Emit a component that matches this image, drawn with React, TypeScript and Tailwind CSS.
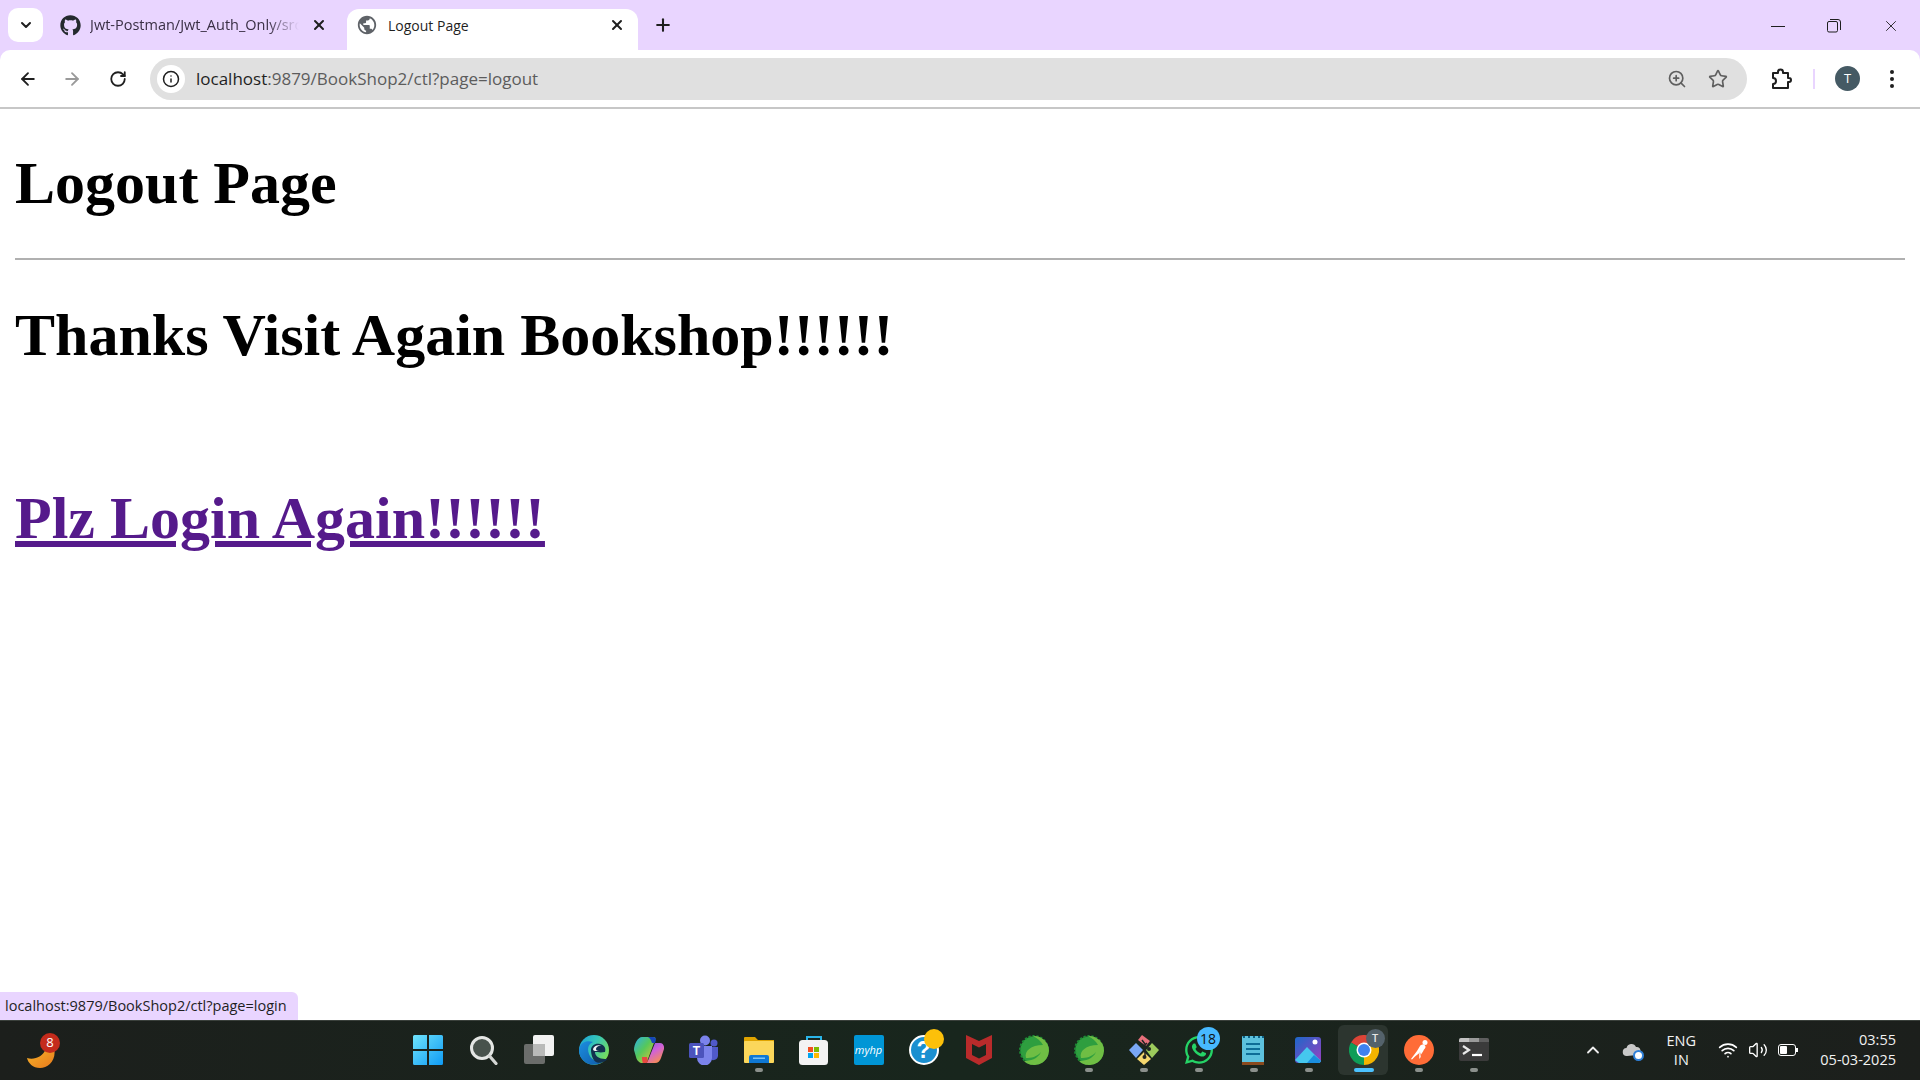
import { ArrowLeft, ArrowRight, ChevronDown, ChevronUp, Info, Plus, RotateCw, Star, Volume2, Wifi, X, ZoomIn } from 'lucide-react';
import { FaGithub, FaWhatsapp } from 'react-icons/fa';
import { MdPublic } from 'react-icons/md';

const uiFont = "font-['Open_Sans','Noto_Sans',sans-serif]";

function Dot({ active }: { active?: boolean }) {
  return (
    <span
      className={`absolute bottom-[3px] left-1/2 h-[4px] -translate-x-1/2 rounded-full ${
        active ? 'w-[20px] bg-[#4cc2ff]' : 'w-[8px] bg-[#8b908c]'
      }`}
    />
  );
}

function TaskIcon({ children, dot, active }: { children: React.ReactNode; dot?: boolean; active?: boolean }) {
  return (
    <div className="relative flex h-[50px] w-[55px] shrink-0 items-center justify-center">
      {active && <div className="absolute inset-y-0 left-[2px] right-[3px] rounded-md bg-[#2c352f]" />}
      <div className="relative flex h-[30px] w-[30px] items-center justify-center">{children}</div>
      {dot && <Dot active={active} />}
    </div>
  );
}

function Badge({ children, className }: { children: React.ReactNode; className: string }) {
  return <span className={`absolute flex items-center justify-center rounded-full ${className}`}>{children}</span>;
}

const WindowsLogo = () => (
  <svg viewBox="0 0 30 30" className="h-[30px] w-[30px] -translate-x-px">
    <defs>
      <linearGradient id="win" x1="0" y1="0" x2="1" y2="1">
        <stop offset="0" stopColor="#6fe3fb" />
        <stop offset="1" stopColor="#0f9bf5" />
      </linearGradient>
    </defs>
    <path d="M0 1.5A1.5 1.5 0 0 1 1.5 0H14v14H0zM16 0h12.500A1.500 1.500 0 0 1 30 1.500V14H16zM0 16h14v14H1.500A1.500 1.500 0 0 1 0 28.500zM16 16h14v12.500a1.500 1.500 0 0 1-1.500 1.500H16z" fill="url(#win)" />
  </svg>
);

const SearchIcon = () => (
  <svg viewBox="0 0 30 30" className="h-[30px] w-[30px]">
    <circle cx="13" cy="13" r="10.500" fill="#48524c" stroke="#e4e6e4" strokeWidth="3" />
    <path d="M20.500 21l6.500 7.500" stroke="#d4d6d4" strokeWidth="3.200" strokeLinecap="round" />
  </svg>
);

const TaskView = () => (
  <svg viewBox="0 0 30 30" className="h-[30px] w-[30px]">
    <rect x="0" y="9" width="21" height="20" rx="2" fill="#6b6d6b" />
    <rect x="9" y="0" width="21" height="21" rx="2" fill="#f2f2f2" />
    <rect x="9" y="9" width="12" height="12" fill="#b9bab9" />
  </svg>
);

const EdgeIcon = () => (
  <svg viewBox="0 0 30 30" className="h-[30px] w-[30px]">
    <defs>
      <linearGradient id="edgeA" x1="0" y1="0" x2="1" y2="0.6">
        <stop offset="0" stopColor="#1a9fdc" />
        <stop offset="0.5" stopColor="#35c6b8" />
        <stop offset="1" stopColor="#76dc5c" />
      </linearGradient>
      <linearGradient id="edgeB" x1="0" y1="0" x2="1" y2="1">
        <stop offset="0" stopColor="#1c8fe0" />
        <stop offset="1" stopColor="#0f5aa8" />
      </linearGradient>
    </defs>
    <circle cx="15" cy="15" r="15" fill="url(#edgeA)" />
    <path d="M0 15C1 7 8 5 14 7c-5 2-6 7-4 12 2 6 9 9 15 6.500C20 31 11 31 6 27 2 24 0 20 0 15z" fill="url(#edgeB)" />
    <path d="M12 15c0-4 4-7 9-6 5 1 6 5 5 8-5 1-7 0-10 0 0 4 4 7 10 7 2 0 3 0 3-.5-3 4-8 5-11 4-4-1-6-8-6-12.500z" fill="#12314f" />
    <path d="M14 14c1-3 5-5 9-3-3-1-6 1-6 3 0 1 1 2 3 2h-4c-1 0-2-1-2-2z" fill="#ffffff" fillOpacity="0.950" />
  </svg>
);

const CopilotIcon = () => (
  <svg viewBox="0 0 30 30" className="h-[30px] w-[30px]">
    <defs>
      <linearGradient id="copA" x1="0" y1="0" x2="1" y2="1">
        <stop offset="0" stopColor="#2bb0e8" />
        <stop offset="0.450" stopColor="#56c85a" />
        <stop offset="1" stopColor="#f6c52f" />
      </linearGradient>
      <linearGradient id="copB" x1="0" y1="0" x2="0.600" y2="1">
        <stop offset="0" stopColor="#7a5ae0" />
        <stop offset="0.500" stopColor="#d062d8" />
        <stop offset="1" stopColor="#f58a5a" />
      </linearGradient>
    </defs>
    <path d="M8 2h11c2.500 0 3 1 2 3l-7 19c-1 3-3 4-6 4-2 0-5-2-6-6L0 15C0 9 4 2 8 2z" fill="url(#copA)" />
    <path d="M11 28h10c3 0 5-2 6-5l3-9c.5-3-1-6-4-6h-5l-6 15c-1 3-2 5-4 5z" fill="url(#copB)" />
    <path d="M14 2h5c2 0 3 1 3 3l-1 3h-3c-1-3-2-5-4-6z" fill="#1646b8" />
    <path d="M8 22h5l1 5-2 1H9c-1-2-1-4-1-6z" fill="#e8483f" />
  </svg>
);

const TeamsIcon = () => (
  <svg viewBox="0 0 30 30" className="h-[30px] w-[30px]">
    <circle cx="16" cy="5.500" r="5" fill="#7b83eb" />
    <circle cx="25" cy="8" r="3.500" fill="#5059c9" />
    <path d="M20 12h9v9a5 5 0 0 1-9 2z" fill="#5059c9" />
    <path d="M8 11h15v12a7 7 0 0 1-15 0z" fill="#7b83eb" />
    <rect x="0" y="8" width="15" height="15" rx="1.500" fill="#4b53bc" />
    <text x="7.500" y="20" textAnchor="middle" fontSize="12" fontWeight="700" fill="#fff" fontFamily="Liberation Sans">T</text>
  </svg>
);

const ExplorerIcon = () => (
  <svg viewBox="0 0 30 30" className="h-[30px] w-[30px]">
    <path d="M0 3a1 1 0 0 1 1-1h10l3 3h16v20H0z" fill="#e0a400" />
    <rect x="0" y="6" width="30" height="22" rx="1" fill="#fbd75b" />
    <path d="M5 28v-6a2 2 0 0 1 2-2h16a2 2 0 0 1 2 2v6z" fill="#0f78d4" />
    <rect x="9" y="22.500" width="12" height="1.500" fill="#7cc4f5" />
  </svg>
);

const StoreIcon = () => (
  <svg viewBox="0 0 30 30" className="h-[30px] w-[30px]">
    <path d="M8 6V2h14v4" fill="none" stroke="#2ab5e8" strokeWidth="2" />
    <rect x="0" y="5" width="29" height="25" rx="3.500" fill="#f3f3f3" />
    <rect x="9" y="12" width="5" height="5" fill="#f25022" />
    <rect x="15" y="12" width="5" height="5" fill="#7fba00" />
    <rect x="9" y="18" width="5" height="5" fill="#00a4ef" />
    <rect x="15" y="18" width="5" height="5" fill="#ffb900" />
  </svg>
);

const HelpIcon = () => (
  <div className="relative flex h-[30px] w-[30px] items-center justify-center rounded-full border-2 border-white bg-[#1a8fd0] font-['Liberation_Sans',sans-serif] text-[23px] font-bold leading-none text-white">
    ?
    <Badge className="-right-[7px] -top-[8px] h-[20px] w-[20px] bg-[#fcc00a]">{null}</Badge>
  </div>
);

const McAfeeIcon = () => (
  <svg viewBox="0 0 30 30" className="h-[30px] w-[30px]">
    <path d="M2 0l13 6 13-6v23l-13 7-13-7z" fill="#b92b2b" />
    <path d="M8 9l7 3.500L22 9v11l-7 3.500L8 20z" fill="#1a261e" />
  </svg>
);

const SpringIcon = () => (
  <svg viewBox="0 0 30 30" className="h-[30px] w-[30px]">
    <circle cx="15" cy="15" r="13.800" fill="#2e9e3f" />
    <circle cx="15" cy="15" r="14" fill="none" stroke="#1e8a35" strokeWidth="2" strokeDasharray="2.200 1.800" />
    <path d="M14 1c8-.5 16 6 16 14 0 9-7 15-15 15-5 0-8-2-10-4 6 0 14-2 17-9-4 5-10 6-15 6-2-7 5-13 17-13-2-4-6-7-10-9z" fill="#6fbe44" />
  </svg>
);

const GitKrakenIcon = () => (
  <svg viewBox="0 0 30 30" className="h-[30px] w-[30px]">
    <path d="M7 8L0 15l7 8 7-8z" fill="#7aa7f5" />
    <path d="M23 8l7 7-7 8-6-8z" fill="#9ccb5c" />
    <path d="M15 17l-7 7 7 6 7-6z" fill="#f5d76e" />
    <path d="M9 5l4-5 8 6-4 5z" fill="#e8707b" />
    <path d="M13 5l3 4v13M18 8l-3 3" stroke="#222" strokeWidth="1.500" fill="none" />
    <circle cx="15.500" cy="22" r="2" fill="#222" />
    <circle cx="20" cy="14" r="2" fill="#222" />
  </svg>
);

const NotepadIcon = () => (
  <svg viewBox="0 0 30 30" className="h-[30px] w-[30px]">
    <rect x="3" y="1" width="22" height="28" rx="1" fill="#5cc1dd" />
    <rect x="3" y="27" width="22" height="3" fill="#8a4a1e" />
    <path d="M7 9h14M7 14h14M7 19h14" stroke="#0e6d97" strokeWidth="2" />
    <path d="M5 1v2M10 1v2M15 1v2M20 1v2M24 1v2" stroke="#0b5f84" strokeWidth="2" />
  </svg>
);

const PhotosIcon = () => (
  <svg viewBox="0 0 30 30" className="h-[30px] w-[30px]">
    <defs>
      <linearGradient id="photo" x1="0" y1="0" x2="1" y2="1">
        <stop offset="0" stopColor="#1c68c9" />
        <stop offset="1" stopColor="#9a3fc0" />
      </linearGradient>
    </defs>
    <rect x="1" y="2" width="26" height="26" rx="3" fill="url(#photo)" />
    <circle cx="21" cy="7" r="2.500" fill="#fff" />
    <path d="M1 25l12-13 14 14v0a3 3 0 0 1-3 2H5z" fill="#45c7ee" />
    <path d="M13 28l7-8 7 6a3 3 0 0 1-3 2z" fill="#1a8fe0" />
  </svg>
);

const ChromeIcon = () => (
  <svg viewBox="0 0 30 30" className="h-[30px] w-[30px]">
    <path d="M15 15L2 7.500A15 15 0 0 1 28 7.500z" fill="#db4437" />
    <path d="M15 15L28 7.500A15 15 0 0 1 15 30z" fill="#f4b400" />
    <path d="M15 15V30A15 15 0 0 1 2 7.500z" fill="#0f9d58" />
    <circle cx="15" cy="15" r="7.500" fill="#fff" />
    <circle cx="15" cy="15" r="6" fill="#3f81f0" />
  </svg>
);

const PostmanIcon = () => (
  <svg viewBox="0 0 30 30" className="h-[30px] w-[30px]">
    <circle cx="15" cy="15" r="15" fill="#ff6c37" />
    <circle cx="21" cy="7.500" r="2.500" fill="#fff" />
    <path d="M7 24l6-8 3-5c1-1.500 4-2 5-.5 1 1 .5 3-1 4l-1 2-2 3-1-2-5 4-3 3z" fill="#fff" />
    <path d="M16 16l1 6-2 2v-5z" fill="#ffd9c9" />
  </svg>
);

const TerminalIcon = () => (
  <svg viewBox="0 0 30 30" className="h-[30px] w-[30px]">
    <rect x="0" y="3" width="30" height="23" rx="2" fill="#3b3b3b" />
    <path d="M0 7V5a2 2 0 0 1 2-2h8v4z" fill="#c2c2c2" />
    <path d="M10 3h10v4H10z" fill="#9a9a9a" />
    <path d="M20 3h8a2 2 0 0 1 2 2v2H20z" fill="#5e5e5e" />
    <path d="M4 11l6 4-6 4" fill="none" stroke="#e8e8e8" strokeWidth="2.200" />
    <path d="M13 20h10" stroke="#fff" strokeWidth="2.200" />
  </svg>
);

export default function App() {
  return (
    <div className={`flex h-screen w-full flex-col overflow-hidden bg-white ${uiFont}`}>
      {/* tab strip */}
      <div className="flex h-[50px] shrink-0 items-end bg-[#e9d5ff] pl-[8px]">
        <div className="mb-[8px] flex h-[34px] w-[35px] items-center justify-center rounded-[10px] bg-white">
          <ChevronDown size={16} strokeWidth={3} className="text-[#1f1f1f]" />
        </div>
        <div className="mb-[8px] flex h-[34px] w-[304px] items-center pl-[17px] pr-[20px]">
          <FaGithub size={21} className="shrink-0 text-[#24292e]" />
          <span className="ml-[9px] w-[209px] overflow-hidden whitespace-nowrap text-[14.500px] text-[#3a2f45] [mask-image:linear-gradient(to_right,black_85%,transparent)]">
            Jwt-Postman/Jwt_Auth_Only/src
          </span>
          <X size={16} strokeWidth={3} className="ml-auto text-[#1f1f1f]" />
        </div>
        <div className="flex h-[41px] w-[291px] items-center rounded-t-[12px] bg-white pb-[9px] pl-[9px] pr-[13px]">
          <MdPublic size={22} className="shrink-0 text-[#5f6368]" />
          <span className="ml-[10px] text-[14px] text-[#1f1f1f]">Logout Page</span>
          <X size={16} strokeWidth={3} className="ml-auto text-[#1f1f1f]" />
        </div>
        <div className="mb-[8px] ml-[15px] flex h-[34px] w-[20px] items-center justify-center">
          <Plus size={20} strokeWidth={2.5} className="text-[#1f1f1f]" />
        </div>
        <div className="ml-auto flex h-[48px] items-center">
          <div className="flex w-[56px] justify-center">
            <div className="h-px w-[14px] bg-[#1f1f1f]" />
          </div>
          <div className="flex w-[56px] justify-center">
            <svg viewBox="0 0 14 14" className="h-[14px] w-[14px]" fill="none" stroke="#1f1f1f" strokeWidth="1">
              <rect x="0.500" y="2.500" width="10" height="10.500" rx="1.500" />
              <path d="M3 .500h8a2.500 2.500 0 0 1 2.500 2.500v8" />
            </svg>
          </div>
          <div className="flex w-[58px] justify-center">
            <X size={18} strokeWidth={1.2} className="text-[#1f1f1f]" />
          </div>
        </div>
      </div>

      {/* toolbar */}
      <div className="flex h-[59px] shrink-0 items-center border-b-2 border-[#c7c7c7] bg-[#e9d5ff]">
        <div className="flex h-full w-full items-center rounded-t-[10px] bg-white">
          <ArrowLeft size={20} strokeWidth={2.2} className="ml-[18px] text-[#1f1f1f]" />
          <ArrowRight size={20} strokeWidth={2.2} className="ml-[24px] text-[#9a9a9a]" />
          <RotateCw size={18} strokeWidth={2.4} className="ml-[27px] text-[#1f1f1f]" />
          <div className="ml-[23px] flex h-[42px] w-[1597px] items-center rounded-full bg-[#e0e0e0] pl-[7px] pr-[19px]">
            <div className="flex h-[28px] w-[28px] items-center justify-center rounded-full bg-white">
              <Info size={18} strokeWidth={2} className="text-[#1f1f1f]" />
            </div>
            <span className="ml-[11px] text-[17px] text-[#5c5c5c]">
              <span className="text-[#1f1f1f]">localhost</span>:9879/BookShop2/ctl?page=logout
            </span>
            <ZoomIn size={20} strokeWidth={2} className="ml-auto text-[#5f5f5f]" />
            <Star size={20} strokeWidth={2} className="ml-[21px] text-[#5f5f5f]" />
          </div>
          <svg viewBox="0 0 24 24" className="ml-[22px] h-[24px] w-[24px]" fill="none" stroke="#1f1f1f" strokeWidth="2">
            <path d="M4 6h5V5a2.500 2.500 0 0 1 5 0v1h5v5h1a2 2 0 0 1 0 4h-1v6H4v-4a2.500 2.500 0 0 0 0-6z" strokeLinejoin="round" />
          </svg>
          <div className="ml-[20px] h-[20px] w-[2px] bg-[#e9d5ff]" />
          <div className="ml-[20px] flex h-[25px] w-[25px] items-center justify-center rounded-full bg-[#455a64] text-[13px] text-white">
            T
          </div>
          <div className="ml-[30px] flex flex-col gap-[3px]">
            <span className="h-[4px] w-[4px] rounded-full bg-[#1f1f1f]" />
            <span className="h-[4px] w-[4px] rounded-full bg-[#1f1f1f]" />
            <span className="h-[4px] w-[4px] rounded-full bg-[#1f1f1f]" />
          </div>
        </div>
      </div>

      {/* page */}
      <div className="relative flex-1 px-[15px] font-['Liberation_Serif',serif] text-black">
        <h1 className="mt-[40px] text-[60px] font-bold leading-[69px]">Logout Page</h1>
        <hr className="mt-[40px] border-0 border-t-2 border-[#b0b0b0]" />
        <h1 className="mt-[41px] text-[60px] font-bold leading-[69px]">Thanks Visit Again Bookshop!!!!!!</h1>
        <h1 className="mt-[114px] text-[60px] font-bold leading-[69px]">
          <a href="#" className="text-[#551a8b] underline">
            Plz Login Again!!!!!!
          </a>
        </h1>
        <div className={`absolute bottom-0 left-0 flex h-[28px] w-[298px] items-center rounded-tr-[6px] bg-[#e9d5ff] pl-[5px] text-[14.500px] text-[#1f1f1f] ${uiFont}`}>
          localhost:9879/BookShop2/ctl?page=login
        </div>
      </div>

      {/* taskbar */}
      <div className="flex h-[60px] shrink-0 items-center border-t border-[#3a403b] bg-gradient-to-r from-[#1c1f1c] via-[#18261d] to-[#1c1f1c] pb-[1px] text-white">
        <div className="relative ml-[25px] h-[50px] w-[376px] shrink-0">
          <svg viewBox="0 0 30 22" className="absolute left-[1px] top-[22px] h-[22px] w-[30px]">
            <defs>
              <linearGradient id="moon" x1="0" y1="0" x2="1" y2="1">
                <stop offset="0" stopColor="#f5b52a" />
                <stop offset="1" stopColor="#e8791c" />
              </linearGradient>
            </defs>
            <path d="M1 11c6 2 16 0 19-10h8c3 12-6 20-14 20C7 21 2 16 1 11z" fill="url(#moon)" />
          </svg>
          <Badge className="left-[15px] top-[8px] h-[20px] w-[20px] bg-[#c42b1c] text-[13px] text-white">8</Badge>
        </div>
        <TaskIcon><WindowsLogo /></TaskIcon>
        <TaskIcon><SearchIcon /></TaskIcon>
        <TaskIcon><TaskView /></TaskIcon>
        <TaskIcon><EdgeIcon /></TaskIcon>
        <TaskIcon><CopilotIcon /></TaskIcon>
        <TaskIcon><TeamsIcon /></TaskIcon>
        <TaskIcon dot><ExplorerIcon /></TaskIcon>
        <TaskIcon><StoreIcon /></TaskIcon>
        <TaskIcon>
          <div className="flex h-[30px] w-[30px] items-center justify-center rounded-[2px] bg-[#0096d6] text-[11px] italic text-white">myhp</div>
        </TaskIcon>
        <TaskIcon><HelpIcon /></TaskIcon>
        <TaskIcon><McAfeeIcon /></TaskIcon>
        <TaskIcon><SpringIcon /></TaskIcon>
        <TaskIcon dot><SpringIcon /></TaskIcon>
        <TaskIcon dot><GitKrakenIcon /></TaskIcon>
        <TaskIcon dot>
          <FaWhatsapp size={32} className="text-[#25d366]" />
          <Badge className="-right-[6px] -top-[8px] h-[23px] w-[23px] bg-[#47b9ff] text-[14px] text-[#111]">18</Badge>
        </TaskIcon>
        <TaskIcon dot><NotepadIcon /></TaskIcon>
        <TaskIcon dot><PhotosIcon /></TaskIcon>
        <TaskIcon dot active>
          <ChromeIcon />
          <Badge className="-right-[6px] -top-[6px] h-[19px] w-[19px] bg-[#54626b] text-[11px] font-semibold text-[#e5e5e5]">T</Badge>
        </TaskIcon>
        <TaskIcon dot><PostmanIcon /></TaskIcon>
        <TaskIcon dot><TerminalIcon /></TaskIcon>

        <div className="ml-auto flex h-full items-center pr-[24px]">
          <ChevronUp size={20} strokeWidth={2.2} className="text-[#eeeeee]" />
          <div className="relative ml-[19px] h-[16px] w-[20px]">
            <svg viewBox="0 0 20 16" className="h-[16px] w-[20px]">
              <path d="M5 14a4 4 0 0 1-.5-8 5 5 0 0 1 9.500-1 4 4 0 0 1 1 8z" fill="#c8c8c8" />
            </svg>
            <span className="absolute -bottom-[3px] -right-[2px] flex h-[11px] w-[11px] items-center justify-center rounded-full border-2 border-[#2f80d8] bg-white" />
          </div>
          <div className="ml-[22px] flex w-[34px] flex-col items-center text-[14.500px] leading-[19px] text-[#f2f2f2]">
            <span>ENG</span>
            <span>IN</span>
          </div>
          <Wifi size={20} strokeWidth={2} className="ml-[20px] text-white" />
          <Volume2 size={20} strokeWidth={1.600} className="ml-[10px] text-white" />
          <div className="relative ml-[10px] flex h-[12px] w-[18px] items-center rounded-[3px] border border-white p-[1px]">
            <div className="h-full w-[7px] rounded-[1px] bg-white" />
            <div className="absolute -right-[3px] h-[4px] w-[2px] bg-white" />
          </div>
          <div className="ml-[24px] flex flex-col items-end text-[14.500px] leading-[20px] text-[#f2f2f2]">
            <span>03:55</span>
            <span>05-03-2025</span>
          </div>
        </div>
      </div>
    </div>
  );
}
